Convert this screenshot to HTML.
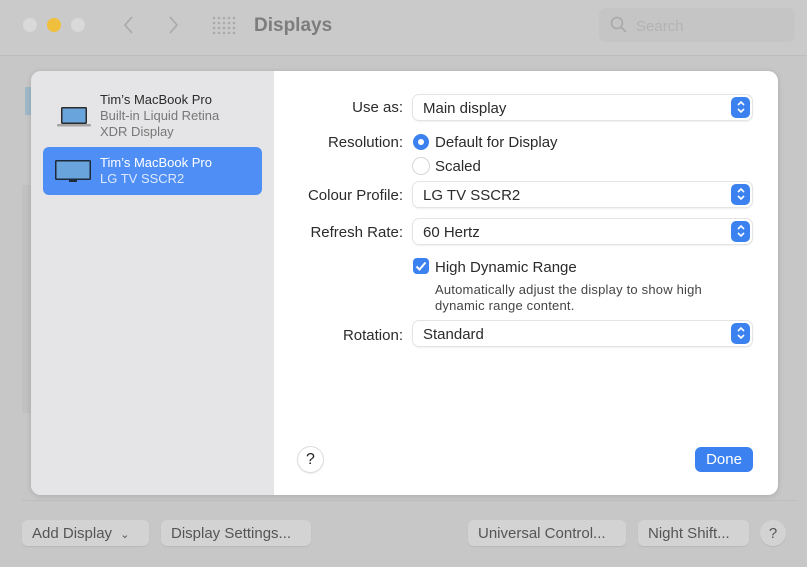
<!DOCTYPE html>
<html><head><meta charset="utf-8"><style>
*{box-sizing:border-box;margin:0;padding:0}
body{width:807px;height:567px;overflow:hidden;background:#c7c7c7;font-family:"Liberation Sans",sans-serif;position:relative;color:#2a2a2a}
.abs{position:absolute}
.title{left:0;top:0;width:807px;height:56px;background:#cbcacb;border-bottom:1px solid #bdbdbd}
.dot{width:14px;height:14px;border-radius:50%;top:18px}
.dlg{left:31px;top:71px;width:747px;height:424px;border-radius:10px;overflow:hidden;background:#fff;box-shadow:0 1px 6px rgba(0,0,0,.15)}
.side{left:0;top:0;width:243px;height:424px;background:#e5e4e6}
.lbl{font-size:15px;text-align:right;width:130px;color:#2b2b2b}
.pop{left:413px;width:339px;height:25px;border-radius:6px;background:#fff;box-shadow:0 0 0 1px #e4e4e4,0 1px 2px rgba(0,0,0,.15);font-size:15px;padding:5px 10px;color:#2b2b2b}
.step{position:absolute;right:2px;top:2px;width:19px;height:21px;border-radius:5px;background:#3b82f0}
.btn{height:26px;top:520px;border-radius:6px;background:#d3d3d3;box-shadow:0 1px 1px rgba(0,0,0,.08);font-size:15px;color:#555;padding:5px 10px}
</style></head><body>
<div class="abs title"></div>
<div class="abs dot" style="left:23px;background:#dad9da"></div>
<div class="abs dot" style="left:47px;background:#f0bf3c"></div>
<div class="abs dot" style="left:71px;background:#dad9da"></div>
<svg class="abs" style="left:120px;top:14px" width="70" height="22"><path d="M12 3l-7 8 7 8" stroke="#a9a9a9" stroke-width="1.6" fill="none"/><path d="M50 3l7 8-7 8" stroke="#a9a9a9" stroke-width="1.6" fill="none"/></svg>
<svg class="abs" style="left:212px;top:16px" width="24" height="18" fill="#a9a9a9"><g id="r"><circle cx="2" cy="2" r="1.3"/><circle cx="7" cy="2" r="1.3"/><circle cx="12" cy="2" r="1.3"/><circle cx="17" cy="2" r="1.3"/><circle cx="22" cy="2" r="1.3"/></g><use href="#r" y="5"/><use href="#r" y="10"/><use href="#r" y="15"/></svg>
<div class="abs" style="left:254px;top:15px;font-size:19px;font-weight:bold;color:#7d7d7d">Displays</div>
<div class="abs" style="left:599px;top:8px;width:196px;height:34px;border-radius:7px;background:#c6c5c6"></div>
<svg class="abs" style="left:610px;top:16px" width="18" height="18"><circle cx="7" cy="7" r="5.5" stroke="#a9a9a9" stroke-width="1.6" fill="none"/><path d="M11 11l5 5" stroke="#a9a9a9" stroke-width="1.8"/></svg>
<div class="abs" style="left:636px;top:18px;font-size:15px;color:#b3b3b3">Search</div>
<div class="abs" style="left:25px;top:87px;width:6px;height:28px;background:#9fb9c8"></div>
<div class="abs" style="left:22px;top:185px;width:9px;height:228px;background:#c2c1c2"></div>
<div class="abs" style="left:22px;top:500px;width:775px;height:1px;background:#bdbdbd"></div>

<div class="abs dlg">
 <div class="abs side"></div>
 <div class="abs" style="left:12px;top:76px;width:219px;height:48px;border-radius:6px;background:#4f8ff5"></div>
 <svg class="abs" style="left:25px;top:34px" width="36" height="24"><rect x="5" y="2" width="26" height="17" rx="1.5" fill="#2b2b2b"/><rect x="6.5" y="3.5" width="23" height="14" fill="#6aa4dd"/><rect x="1" y="19" width="34" height="2.5" rx="1" fill="#a5a5a5"/></svg>
 <svg class="abs" style="left:23px;top:88px" width="38" height="26"><rect x="1" y="1" width="36" height="20" rx="1.5" fill="#1c2a3a"/><rect x="2.5" y="2.5" width="33" height="17" fill="#6aa4dd"/><rect x="15" y="21" width="8" height="2" fill="#1c2a3a"/></svg>
 <div class="abs" style="left:69px;top:21px;font-size:13px;line-height:16px;color:#2b2b2b">Tim’s MacBook Pro<br><span style="color:#777">Built-in Liquid Retina<br>XDR Display</span></div>
 <div class="abs" style="left:69px;top:84px;font-size:13px;line-height:16px;color:#fff">Tim’s MacBook Pro<br><span style="color:#dce8fd">LG TV SSCR2</span></div>
 <div class="abs" style="left:267px;top:376px;width:25px;height:25px;border-radius:50%;background:#fff;box-shadow:0 0 0 1px #ddd,0 1px 2px rgba(0,0,0,.2);font-size:16px;text-align:center;line-height:25px;color:#222">?</div>
 <div class="abs" style="left:664px;top:376px;width:58px;height:25px;border-radius:6px;background:#3b82f0;color:#fff;font-size:15px;text-align:center;line-height:26px">Done</div>
</div>

<div class="abs lbl" style="left:273px;top:99px">Use as:</div>
<div class="abs lbl" style="left:273px;top:134px">Resolution:</div>
<div class="abs lbl" style="left:273px;top:187px">Colour Profile:</div>
<div class="abs lbl" style="left:273px;top:224px">Refresh Rate:</div>
<div class="abs lbl" style="left:273px;top:327px">Rotation:</div>

<div class="abs pop" style="top:95px">Main display<span class="step"></span></div>
<div class="abs pop" style="top:182px">LG TV SSCR2<span class="step"></span></div>
<div class="abs pop" style="top:219px">60 Hertz<span class="step"></span></div>
<div class="abs pop" style="top:321px">Standard<span class="step"></span></div>
<svg class="abs" style="left:733px;top:97px" width="16" height="260"><g stroke="#fff" stroke-width="1.6" fill="none"><path d="M5 8l3-3 3 3M5 12l3 3 3-3"/><path d="M5 95l3-3 3 3M5 99l3 3 3-3"/><path d="M5 132l3-3 3 3M5 136l3 3 3-3"/><path d="M5 234l3-3 3 3M5 238l3 3 3-3"/></g></svg>

<div class="abs" style="left:413px;top:134px;width:16px;height:16px;border-radius:50%;background:#3b82f0"></div>
<div class="abs" style="left:418px;top:139px;width:6px;height:6px;border-radius:50%;background:#fff"></div>
<div class="abs" style="left:413px;top:158px;width:16px;height:16px;border-radius:50%;background:#fff;box-shadow:0 0 0 1px #d6d6d6"></div>
<div class="abs" style="left:435px;top:134px;font-size:15px">Default for Display</div>
<div class="abs" style="left:435px;top:158px;font-size:15px">Scaled</div>

<div class="abs" style="left:413px;top:258px;width:16px;height:16px;border-radius:4px;background:#3b82f0"></div>
<svg class="abs" style="left:413px;top:258px" width="16" height="16"><path d="M3.5 8.5l3 3 6-7" stroke="#fff" stroke-width="2" fill="none"/></svg>
<div class="abs" style="left:435px;top:259px;font-size:15px">High Dynamic Range</div>
<div class="abs" style="left:435px;top:282px;font-size:13px;line-height:16px;color:#444;letter-spacing:0.2px">Automatically adjust the display to show high<br>dynamic range content.</div>

<div class="abs btn" style="left:22px;width:127px">Add Display <span style="font-size:11px;margin-left:4px">&#8964;</span></div>
<div class="abs btn" style="left:161px;width:150px">Display Settings...</div>
<div class="abs btn" style="left:468px;width:158px">Universal Control...</div>
<div class="abs btn" style="left:638px;width:111px">Night Shift...</div>
<div class="abs btn" style="left:760px;width:26px;border-radius:50%;text-align:center;padding:5px 0">?</div>
</body></html>
